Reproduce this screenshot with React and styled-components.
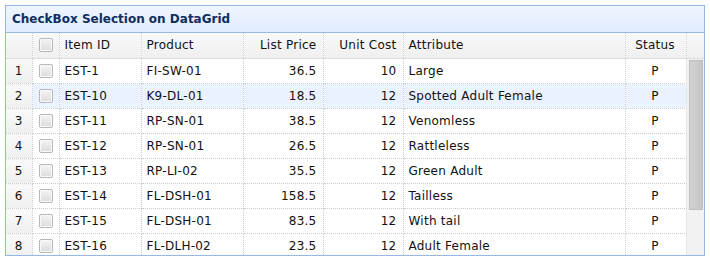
import React from "react";
import styled, { createGlobalStyle } from "styled-components";

const GlobalStyle = createGlobalStyle`
    body { margin: 0; background: #fff; font-family: "DejaVu Sans", Verdana, sans-serif; font-size: 12px; color: #111; }
`;

const Panel = styled.div`
    width: 700px;
    margin: 5px;
    border: 1px solid #95b8e7;
    box-sizing: border-box;
    overflow: hidden;
`;

const Title = styled.div`
    height: 26px;
    line-height: 26px;
    padding-left: 6px;
    border-bottom: 1px solid #95b8e7;
    background: linear-gradient(to bottom, #eff5ff 0, #e0ecff 100%);
    color: #0e2d5f;
    font-weight: bold;
    font-size: 12px;
`;

const Grid = styled.table`
    table-layout: fixed;
    border-collapse: collapse;
    width: ${(p) => p.width}px;
    letter-spacing: 0.25px;
    td { padding: 0; border-right: 1px dotted #ccc; border-bottom: 1px dotted #ccc; overflow: hidden; white-space: nowrap; }
`;

const HeadRow = styled.tr`
    height: 25px;
    background: linear-gradient(to bottom, #f9f9f9 0, #efefef 100%);
    td { border-bottom: 1px solid #ddd; }
`;

const Row = styled.tr`
    height: 25px;
    background: ${(p) => (p.over ? "#eaf2ff" : "#fff")};
`;

const Cell = styled.td`
    text-align: ${(p) => p.align || "left"};
    padding: 0 6px 0 5px !important;
`;

const NumCell = styled.td`
    text-align: center;
    background: linear-gradient(to bottom, #f9f9f9 0, #efefef 100%);
`;

const CkCell = styled.td`
    text-align: center;
    line-height: 0;
`;

const Box = styled.span`
    display: inline-block;
    width: 12px;
    height: 12px;
    border: 1px solid #b8b8b8;
    border-radius: 2px;
    background: linear-gradient(to bottom, #f4f4f4 0, #dcdcdc 100%);
    box-shadow: inset 0 0 0 1px #fafafa;
`;

const Body = styled.div`
    display: flex;
    height: 196px;
`;

const Rows = styled.div`
    flex: 1;
    overflow: hidden;
`;

const Track = styled.div`
    width: 18px;
    flex: none;
    background: #f2f2f2;
    border-left: 1px solid #e6e6e6;
    box-sizing: border-box;
    padding: 1px 1px 0 2px;
`;

const Thumb = styled.div`
    height: 150px;
    background: linear-gradient(to right, #d2d2d2 0, #c6c6c6 100%);
    border: 1px solid #bdbdbd;
    box-sizing: border-box;
`;

const cols = [26, 27, 82, 102, 80, 80, 222, 61];

const data = [
    ["EST-1", "FI-SW-01", "36.5", "10", "Large"],
    ["EST-10", "K9-DL-01", "18.5", "12", "Spotted Adult Female"],
    ["EST-11", "RP-SN-01", "38.5", "12", "Venomless"],
    ["EST-12", "RP-SN-01", "26.5", "12", "Rattleless"],
    ["EST-13", "RP-LI-02", "35.5", "12", "Green Adult"],
    ["EST-14", "FL-DSH-01", "158.5", "12", "Tailless"],
    ["EST-15", "FL-DSH-01", "83.5", "12", "With tail"],
    ["EST-16", "FL-DLH-02", "23.5", "12", "Adult Female"],
];

const Cols = ({ list }) => (
    <colgroup>
        {list.map((w, i) => <col key={i} style={{ width: w }} />)}
    </colgroup>
);

const App = () => {
    const bodyWidth = cols.reduce((a, b) => a + b, 0);
    return (
        <>
            <GlobalStyle />
            <Panel>
                <Title>CheckBox Selection on DataGrid</Title>
                <Grid width={bodyWidth + 18}>
                    <Cols list={[...cols, 18]} />
                    <tbody>
                        <HeadRow>
                            <td></td>
                            <CkCell><Box /></CkCell>
                            <Cell>Item ID</Cell>
                            <Cell>Product</Cell>
                            <Cell align="right">List Price</Cell>
                            <Cell align="right">Unit Cost</Cell>
                            <Cell>Attribute</Cell>
                            <Cell align="center">Status</Cell>
                            <td style={{ borderRight: 0 }}></td>
                        </HeadRow>
                    </tbody>
                </Grid>
                <Body>
                    <Rows>
                        <Grid width={bodyWidth}>
                            <Cols list={cols} />
                            <tbody>
                                {data.map((r, i) => (
                                    <Row key={r[0]} over={i === 1 ? 1 : 0}>
                                        <NumCell>{i + 1}</NumCell>
                                        <CkCell><Box /></CkCell>
                                        <Cell>{r[0]}</Cell>
                                        <Cell>{r[1]}</Cell>
                                        <Cell align="right">{r[2]}</Cell>
                                        <Cell align="right">{r[3]}</Cell>
                                        <Cell>{r[4]}</Cell>
                                        <Cell align="center">P</Cell>
                                    </Row>
                                ))}
                            </tbody>
                        </Grid>
                    </Rows>
                    <Track><Thumb /></Track>
                </Body>
            </Panel>
        </>
    );
};

export default App;
